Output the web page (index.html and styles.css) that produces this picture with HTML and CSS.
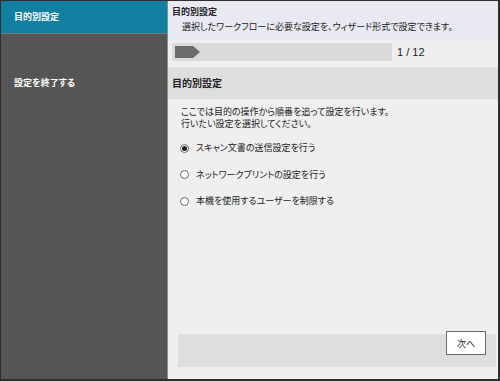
FILE: index.html
```html
<!DOCTYPE html>
<html lang="ja">
<head>
<meta charset="utf-8">
<link rel="stylesheet" href="styles.css">
</head>
<body>
<div class="frame">
  <nav class="sidebar">
    <div class="nav-item active">目的別設定</div>
    <div class="nav-item exit">設定を終了する</div>
  </nav>
  <main class="main">
    <header class="head">
      <div class="title">目的別設定</div>
      <div class="subtitle">選択したワークフローに必要な設定を、ウィザード形式で設定できます。</div>
    </header>
    <div class="progress">
      <div class="track"><div class="arrow"></div></div>
      <div class="count">1 / 12</div>
    </div>
    <div class="section-head">目的別設定</div>
    <div class="body">
      <p class="desc">ここでは目的の操作から順番を追って設定を行います。<br>行いたい設定を選択してください。</p>
      <ul class="options">
        <li class="opt"><span class="radio checked"></span>スキャン文書の送信設定を行う</li>
        <li class="opt"><span class="radio"></span>ネットワークプリントの設定を行う</li>
        <li class="opt"><span class="radio"></span>本機を使用するユーザーを制限する</li>
      </ul>
      <div class="spacer"></div>
      <div class="footer">
        <button class="next">次へ</button>
      </div>
    </div>
  </main>
</div>
</body>
</html>
```

FILE: styles.css
```css
* { box-sizing: border-box; }
html, body { margin: 0; padding: 0; }
body {
  font-family: "Noto Sans CJK JP", "Liberation Sans", sans-serif;
  font-feature-settings: "palt";
  color: #222;
}
.frame {
  width: 500px;
  height: 381px;
  border-style: solid;
  border-color: #2e2e2e;
  border-width: 1px 2px 2px 1px;
  display: flex;
  background: #efefef;
}
.sidebar {
  width: 167px;
  background: #555555;
  border-right: 1px solid #8c8c8c;
  display: flex;
  flex-direction: column;
}
.nav-item {
  color: #fff;
  font-size: 9px;
  font-weight: bold;
  padding-left: 13px;
}
.nav-item.active {
  background: #117f9f;
  height: 33px;
  line-height: 32px;
  border-bottom: 1px solid #7a7a7a;
}
.nav-item.exit {
  margin-top: 41px;
  line-height: 16px;
}
.main {
  flex: 1;
  display: flex;
  flex-direction: column;
}
.head {
  background: #e8e9f1;
  height: 39px;
  padding: 4px 0 0 4px;
}
.title {
  font-size: 9px;
  font-weight: bold;
  line-height: 13px;
}
.subtitle {
  font-size: 9px;
  line-height: 14px;
  padding-left: 10px;
  margin-top: 2px;
}
.progress {
  height: 27px;
  display: flex;
  align-items: flex-start;
  padding: 3px 0 0 4px;
}
.track {
  width: 220px;
  height: 18px;
  background: #dadada;
  padding: 3px 0 0 3px;
}
.arrow {
  width: 25px;
  height: 12px;
  background: #6c6c6c;
  clip-path: polygon(0 0, 72% 0, 100% 50%, 72% 100%, 0 100%);
}
.count {
  font-family: "Liberation Sans", sans-serif;
  font-size: 11px;
  line-height: 18px;
  margin-left: 5px;
}
.section-head {
  height: 32px;
  background: #dedede;
  font-size: 10px;
  font-weight: bold;
  line-height: 32px;
  padding-left: 4px;
}
.body {
  flex: 1;
  display: flex;
  flex-direction: column;
  padding: 7px 2px 12px 10px;
}
.desc {
  margin: 0 0 0 3px;
  font-size: 9px;
  line-height: 12px;
}
.options {
  list-style: none;
  margin: 5px 0 0 0;
  padding: 0;
}
.opt {
  display: flex;
  align-items: center;
  font-size: 9px;
  height: 26.5px;
  line-height: 12px;
}
.radio {
  width: 9px;
  height: 9px;
  border: 1px solid #6a6a6a;
  border-radius: 50%;
  background: #fff;
  margin: 0 7px 0 2px;
  display: flex;
  align-items: center;
  justify-content: center;
}
.radio.checked::after {
  content: "";
  width: 5px;
  height: 5px;
  border-radius: 50%;
  background: #1e1e1e;
}
.spacer { flex: 1; }
.footer {
  height: 33px;
  background: #dedede;
  display: flex;
  justify-content: flex-end;
  align-items: flex-start;
  padding-right: 10px;
}
.next {
  margin-top: -3px;
  width: 40px;
  height: 24px;
  background: #fff;
  border: 1px solid #6b6b6b;
  font-family: "Noto Sans CJK JP", sans-serif;
  font-size: 9px;
  color: #222;
  padding: 0;
}
```
